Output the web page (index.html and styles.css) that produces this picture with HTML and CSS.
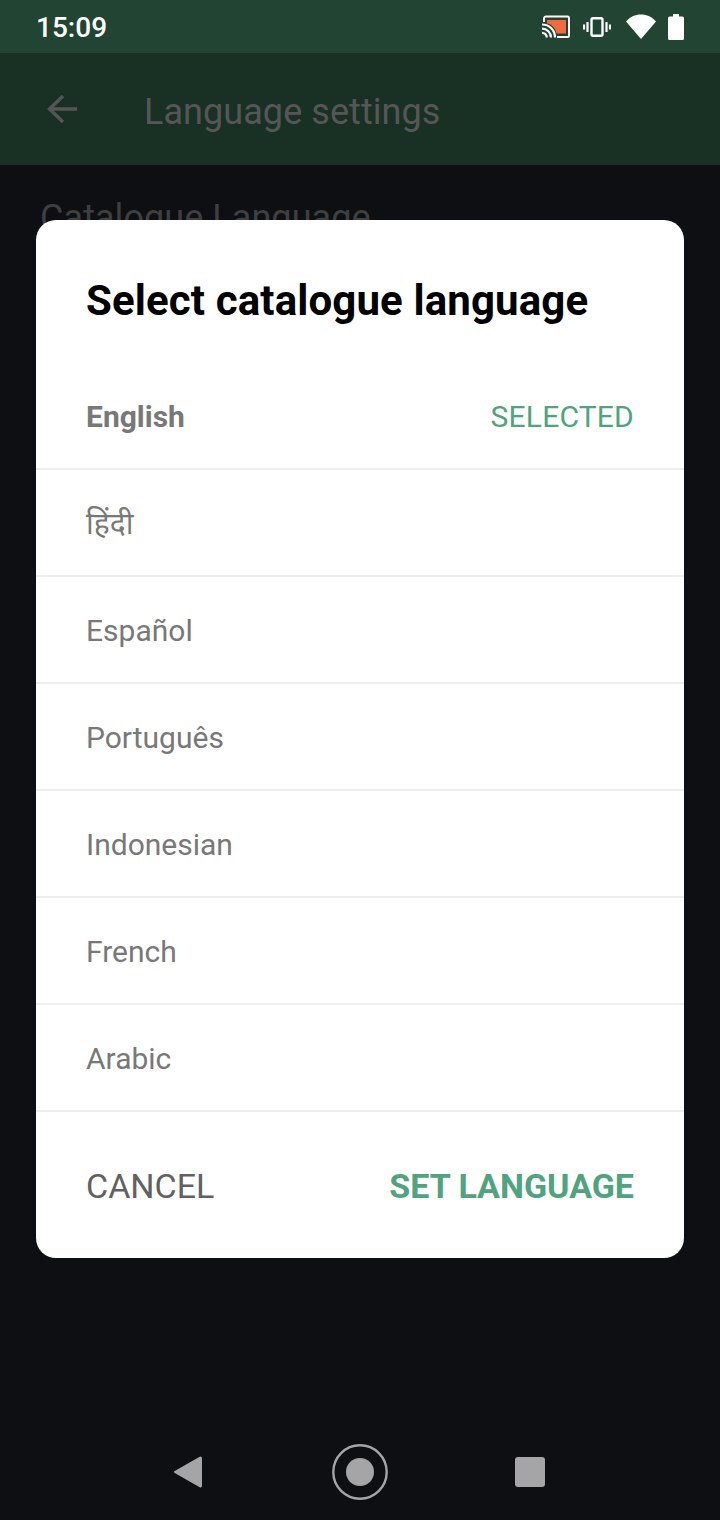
FILE: index.html
```html
<!DOCTYPE html>
<html lang="en">
<head>
<meta charset="utf-8">
<title>Language settings</title>
<link rel="stylesheet" href="styles.css">
</head>
<body>
<div class="screen">
  <div class="status">
    <span class="time">15:09</span>
    <div class="status-icons">
      <svg class="ic-cast" width="28" height="24" viewBox="0 0 28 24">
        <path d="M2 7V3.500A2 2 0 0 1 4 1.500h21.500a1.500 1.500 0 0 1 1.500 1.500v17.500a1.500 1.500 0 0 1-1.500 1.500H15" fill="none" stroke="#fff" stroke-width="2"/>
        <path d="M5 5h19v13.500H14.500C13.500 13 9.500 9 5 8.500z" fill="#f26a3d"/>
        <path d="M0 9.500c7.500 0 13 5.500 13 13M0 13.700c5 0 9 4 9 8.800M0 17.800c2.500 0 4.800 2 4.800 4.700" fill="none" stroke="#fff" stroke-width="2.200"/>
      </svg>
      <svg class="ic-vibrate" width="28" height="20" viewBox="0 0 28 20">
        <rect x="8.500" y="1.200" width="11" height="17.600" rx="1.500" fill="none" stroke="#fff" stroke-width="2.400"/>
        <path d="M4.500 5v10M1 7.500v5M23.500 5v10M27 7.500v5" stroke="#fff" stroke-width="2.200" fill="none"/>
      </svg>
      <svg class="ic-wifi" width="30" height="25" viewBox="0 0 30 25">
        <path d="M15 25 0 7.500C4 3 9 .500 15 .500s11 2.500 15 7z" fill="#fff"/>
      </svg>
      <svg class="ic-battery" width="16" height="26" viewBox="0 0 16 26">
        <path d="M5 0h6v2.500h3.500A1.500 1.500 0 0 1 16 4v20.500a1.500 1.500 0 0 1-1.500 1.500h-13A1.500 1.500 0 0 1 0 24.500V4a1.500 1.500 0 0 1 1.500-1.500H5z" fill="#fff"/>
      </svg>
    </div>
  </div>
  <header class="appbar">
    <svg class="back" width="32" height="32" viewBox="0 0 32 32">
      <path d="M31 16H5M17 3 3.500 16 17 29" fill="none" stroke="#555" stroke-width="3.400"/>
    </svg>
    <span class="appbar-title">Language settings</span>
  </header>
  <main class="content">
    <p class="section">Catalogue Language</p>
  </main>
  <nav class="navbar">
    <svg width="28" height="32" viewBox="0 0 28 32">
      <path d="M28 2v28a1.500 1.500 0 0 1-2.300 1.300L.700 17a1.200 1.200 0 0 1 0-2L25.700.700A1.500 1.500 0 0 1 28 2z" fill="#a5a5a7"/>
    </svg>
    <svg width="56" height="56" viewBox="0 0 56 56">
      <circle cx="28" cy="28" r="26.700" fill="none" stroke="#a5a5a7" stroke-width="2.400"/>
      <circle cx="28" cy="28" r="14" fill="#a5a5a7"/>
    </svg>
    <svg width="30" height="30" viewBox="0 0 30 30">
      <rect width="30" height="30" rx="3" fill="#a5a5a7"/>
    </svg>
  </nav>
  <section class="dialog">
    <h1 class="dialog-title">Select catalogue language</h1>
    <ul class="lang-list">
      <li class="lang lang-active"><span class="lang-name">English</span><span class="lang-flag">SELECTED</span></li>
      <li class="lang"><span class="lang-name" lang="hi">हिंदी</span></li>
      <li class="lang"><span class="lang-name">Español</span></li>
      <li class="lang"><span class="lang-name">Português</span></li>
      <li class="lang"><span class="lang-name">Indonesian</span></li>
      <li class="lang"><span class="lang-name">French</span></li>
      <li class="lang"><span class="lang-name">Arabic</span></li>
    </ul>
    <div class="actions">
      <span class="cancel">CANCEL</span>
      <span class="confirm">SET LANGUAGE</span>
    </div>
  </section>
</div>
</body>
</html>
```

FILE: styles.css
```css
* { box-sizing: border-box; margin: 0; padding: 0; }
html, body { width: 720px; height: 1520px; overflow: hidden; background: #0d0f12; }
body { font-family: Roboto, "Noto Sans", "Noto Sans Devanagari", sans-serif; }
.screen { position: relative; width: 720px; height: 1520px; display: flex; flex-direction: column; background: #0d0f12; }

.status { height: 53px; background: #214433; display: flex; align-items: center; justify-content: space-between; padding: 0 36px; }
.time { color: #fff; font-size: 28px; font-weight: 500; line-height: 53px; padding-top: 1px; }
.status-icons { display: flex; align-items: center; }
.status-icons svg { display: block; flex: none; }
.ic-vibrate { margin-left: 13px; }
.ic-wifi { margin-left: 15px; }
.ic-battery { margin-left: 12px; }

.appbar { height: 112px; background: #193024; display: flex; align-items: center; padding-left: 46px; }
.back { display: block; flex: none; }
.appbar-title { margin-left: 66px; padding-top: 6px; color: #555757; font-size: 36px; line-height: 42px; letter-spacing: 0.060px; }

.content { flex: 1; padding: 32px 40px 0; }
.section { color: #3e3f41; font-size: 36px; line-height: 42px; letter-spacing: 0.060px; }

.navbar { height: 97px; display: flex; align-items: center; justify-content: center; padding-right: 2px; }
.navbar svg { display: block; flex: none; }
.navbar svg:nth-child(2) { margin: 0 127px 0 130px; }

.dialog { position: absolute; left: 36px; top: 220px; width: 648px; height: 1038px; background: #fff; border-radius: 20px; display: flex; flex-direction: column; }
.dialog-title { padding: 57px 50px 0; height: 143px; color: #000; font-size: 42px; line-height: 48px; font-weight: 700; letter-spacing: 0.120px; }
.lang-list { list-style: none; }
.lang { height: 107px; display: flex; align-items: center; justify-content: space-between; padding: 2px 50px 0; border-bottom: 2px solid #eeeeee; }
.lang-name { color: #787878; font-size: 30px; line-height: 34px; }
.lang-active .lang-name { font-weight: 700; }
.lang-flag { color: #4fa37e; font-size: 30px; line-height: 34px; letter-spacing: 0.200px; }
.actions { flex: 1; display: flex; align-items: center; justify-content: space-between; padding: 2px 50px 0; }
.cancel { color: #616161; font-size: 34px; line-height: 40px; }
.confirm { color: #4fa37e; font-size: 34px; line-height: 40px; font-weight: 700; }
```
